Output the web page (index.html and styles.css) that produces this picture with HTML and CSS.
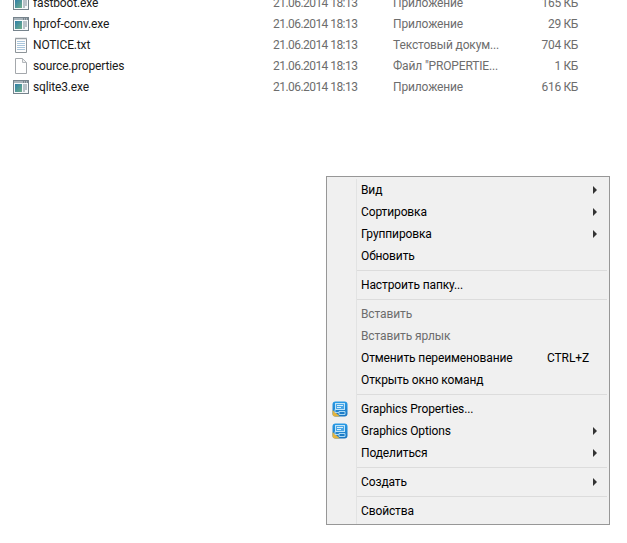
FILE: index.html
```html
<!DOCTYPE html>
<html lang="ru">
<head>
<meta charset="utf-8">
<title>Проводник</title>
<link rel="stylesheet" href="styles.css">
</head>
<body>
<svg width="0" height="0" class="defs">
  <defs>
    <linearGradient id="pane" x1="0" y1="0" x2="1" y2="1">
      <stop offset="0" stop-color="#2f7fa8"/>
      <stop offset="1" stop-color="#6fae8a"/>
    </linearGradient>
    <linearGradient id="badge" x1="0" y1="0" x2="0" y2="1">
      <stop offset="0" stop-color="#2a9be6"/>
      <stop offset="1" stop-color="#1a74bf"/>
    </linearGradient>
    <symbol id="exe" viewBox="0 0 16 16">
      <rect x="0.5" y="1.5" width="15" height="13" fill="#f6f8fa" stroke="#76838c"/>
      <rect x="1" y="2" width="14" height="2" fill="#aab4bb"/>
      <path d="M10 3h1M12 3h1M14 3h1" stroke="#4c5a64"/>
      <rect x="2" y="5" width="7" height="8" fill="url(#pane)"/>
      <path d="M10 6h4M10 8h4M10 10h4M10 12h2" stroke="#7b8b97"/>
    </symbol>
    <symbol id="txt" viewBox="0 0 16 16">
      <path d="M2.5 1.5h11v14h-11z" fill="#fdfdfd" stroke="#8d9499"/>
      <path d="M3 .5v2M5 .5v2M7 .5v2M9 .5v2M11 .5v2M13 .5v2" stroke="#a3a8ac"/>
      <path d="M4 4.5h8M4 6.5h8M4 8.5h8M4 10.5h8M4 12.5h8" stroke="#a9c6dc"/>
    </symbol>
    <symbol id="doc" viewBox="0 0 16 16">
      <path d="M2.5.5h7l4 4v11h-11z" fill="#fff" stroke="#a4a8ac"/>
      <path d="M9.5.5v4h4z" fill="#f0f0f0" stroke="#b4b8bc"/>
    </symbol>
    <symbol id="gfx" viewBox="0 0 16 16">
      <rect x="0.5" y="0.5" width="15" height="15" rx="3" fill="url(#badge)"/>
      <path d="M0.5 9v4a2.5 2.5 0 0 0 2.5 2.5h5z" fill="#e2b33f"/>
      <rect x="3.5" y="2.5" width="9" height="6" fill="#4aa6e6" stroke="#bfe4f8"/>
      <path d="M5 4.5h6M5 6.5h4" stroke="#d7effb"/>
      <path d="M7 10.5h6v3H7zM3 8.5v3h4" stroke="#a9d8f3" fill="none"/>
    </symbol>
  </defs>
</svg>

<ul class="files">
  <li class="file"><span class="name"><svg class="ficon"><use href="#exe"/></svg>fastboot.exe</span><span class="date">21.06.2014 18:13</span><span class="type">Приложение</span><span class="size">165 КБ</span></li>
  <li class="file"><span class="name"><svg class="ficon"><use href="#exe"/></svg>hprof-conv.exe</span><span class="date">21.06.2014 18:13</span><span class="type">Приложение</span><span class="size">29 КБ</span></li>
  <li class="file"><span class="name"><svg class="ficon"><use href="#txt"/></svg>NOTICE.txt</span><span class="date">21.06.2014 18:13</span><span class="type">Текстовый докум...</span><span class="size">704 КБ</span></li>
  <li class="file"><span class="name"><svg class="ficon"><use href="#doc"/></svg>source.properties</span><span class="date">21.06.2014 18:13</span><span class="type">Файл "PROPERTIE...</span><span class="size">1 КБ</span></li>
  <li class="file"><span class="name"><svg class="ficon"><use href="#exe"/></svg>sqlite3.exe</span><span class="date">21.06.2014 18:13</span><span class="type">Приложение</span><span class="size">616 КБ</span></li>
</ul>

<div class="menu">
  <div class="item"><span class="label">Вид</span><span class="arrow"></span></div>
  <div class="item"><span class="label">Сортировка</span><span class="arrow"></span></div>
  <div class="item"><span class="label">Группировка</span><span class="arrow"></span></div>
  <div class="item"><span class="label">Обновить</span></div>
  <div class="sep"></div>
  <div class="item"><span class="label">Настроить папку...</span></div>
  <div class="sep"></div>
  <div class="item off"><span class="label">Вставить</span></div>
  <div class="item off"><span class="label">Вставить ярлык</span></div>
  <div class="item"><span class="label">Отменить переименование</span><span class="key">CTRL+Z</span></div>
  <div class="item"><span class="label">Открыть окно команд</span></div>
  <div class="sep"></div>
  <div class="item"><svg class="micon"><use href="#gfx"/></svg><span class="label">Graphics Properties...</span></div>
  <div class="item"><svg class="micon"><use href="#gfx"/></svg><span class="label">Graphics Options</span><span class="arrow"></span></div>
  <div class="item"><span class="label">Поделиться</span><span class="arrow"></span></div>
  <div class="sep"></div>
  <div class="item"><span class="label">Создать</span><span class="arrow"></span></div>
  <div class="sep"></div>
  <div class="item"><span class="label">Свойства</span></div>
</div>
</body>
</html>
```
FILE: styles.css
```css
html, body {
  margin: 0;
  padding: 0;
  background: #fff;
  height: 100%;
  overflow: hidden;
  font-family: Roboto, "Noto Sans", sans-serif;
  font-size: 12px;
}
.defs {
  display: block;
  height: 0;
}
.files {
  list-style: none;
  margin: -8px 0 0;
  padding: 0;
}
.file {
  display: flex;
  align-items: center;
  height: 21px;
  color: #6d6d6d;
}
.name {
  display: flex;
  align-items: center;
  gap: 4px;
  width: 273px;
  padding-left: 13px;
  box-sizing: border-box;
  color: #1a1a1a;
  letter-spacing: -0.15px;
}
.ficon {
  width: 16px;
  height: 16px;
  flex: none;
}
.date {
  width: 120px;
  letter-spacing: -0.55px;
}
.type {
  width: 115px;
  letter-spacing: -0.15px;
}
.size {
  width: 70px;
  text-align: right;
  letter-spacing: -0.35px;
}
.menu {
  position: absolute;
  left: 326px;
  top: 176px;
  width: 284px;
  height: 349px;
  box-sizing: border-box;
  border: 1px solid #979797;
  background: #f0f0f0 linear-gradient(#e2e3e3, #e2e3e3) no-repeat 29px 2px / 1px 345px;
  padding: 2px 0;
  color: #000;
  letter-spacing: -0.12px;
}
.item {
  position: relative;
  display: flex;
  align-items: center;
  height: 22px;
  padding-left: 34px;
  padding-right: 20px;
}
.off {
  color: #6d6d6d;
}
.label {
  flex: 1;
}
.arrow {
  width: 0;
  height: 0;
  margin-right: -8px;
  border-left: 4px solid #333;
  border-top: 4px solid transparent;
  border-bottom: 4px solid transparent;
}
.micon {
  position: absolute;
  left: 5px;
  top: 3px;
  width: 16px;
  height: 16px;
}
.sep {
  height: 1px;
  margin: 3px 2px 3px 30px;
  background: #dcdcdc;
}
```
